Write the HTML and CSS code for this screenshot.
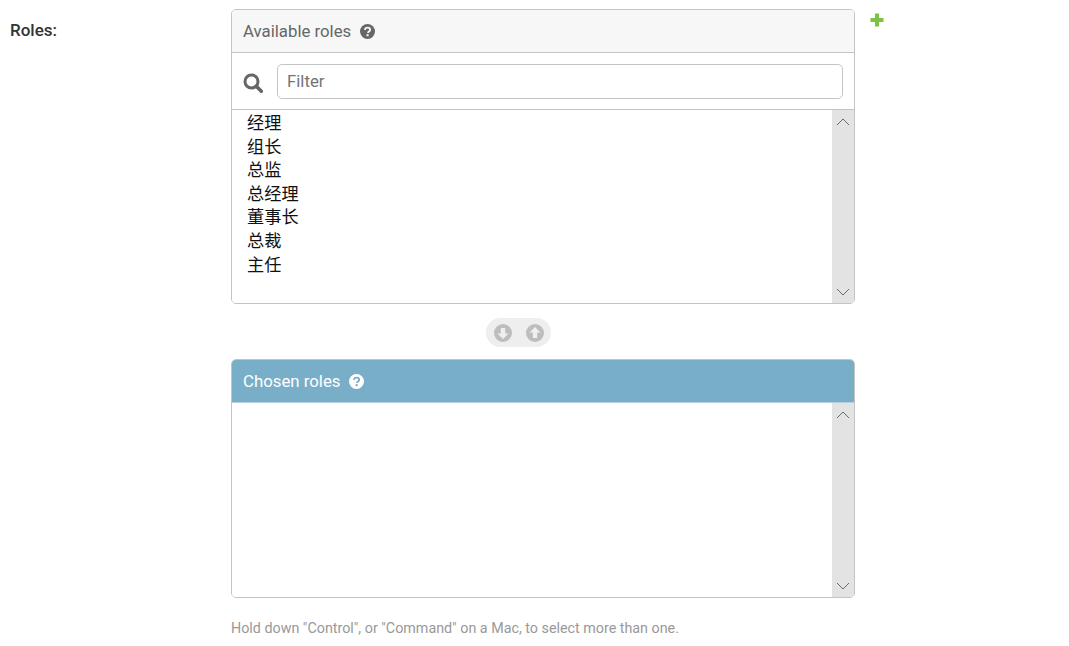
FILE: index.html
```html
<!DOCTYPE html>
<html lang="en">
<head>
  <meta charset="UTF-8" />
  <title>Roles</title>
  <link rel="stylesheet" href="styles.css">
</head>
<body>
  <div class="form-row">
    <label class="field-label">Roles:</label>
    <div class="field-body">
      <div class="selector">
        <div class="box">
          <h2 class="box-title">Available roles
            <svg class="help" viewBox="0 0 16 16"><circle cx="8" cy="8" r="8" fill="currentColor"/><path d="M5.2 6.2c.2-1.6 1.300-2.400 2.900-2.400 1.600 0 2.700.9 2.700 2.200 0 1-.6 1.500-1.300 2-.6.4-.9.7-.9 1.500" fill="none" stroke="var(--help-mark)" stroke-width="2"/><rect x="7" y="10.800" width="2.200" height="2.200" fill="var(--help-mark)"/></svg>
          </h2>
          <div class="filter-row">
            <svg class="search" viewBox="0 0 20 20"><circle cx="8.500" cy="8.500" r="6.500" fill="none" stroke="currentColor" stroke-width="3"/><path d="M13.300 13.300l5 5" stroke="currentColor" stroke-width="3.600" stroke-linecap="round"/></svg>
            <input class="filter" type="text" placeholder="Filter" />
          </div>
          <div class="list list-available">
            <ul class="items">
              <li>经理</li>
              <li>组长</li>
              <li>总监</li>
              <li>总经理</li>
              <li>董事长</li>
              <li>总裁</li>
              <li>主任</li>
            </ul>
            <div class="scrollbar">
              <svg viewBox="0 0 14 8"><path d="M1 7l6-6 6 6" fill="none" stroke="#6b6b6b"/></svg>
              <svg viewBox="0 0 14 8"><path d="M1 1l6 6 6-6" fill="none" stroke="#6b6b6b"/></svg>
            </div>
          </div>
        </div>

        <div class="mover-row">
          <div class="mover">
            <svg viewBox="0 0 18 18"><circle cx="9" cy="9" r="9" fill="#bdbdbd"/><path d="M9 15L3.500 9.500h3.300V4h4.400v5.500h3.300z" fill="#efefef"/></svg>
            <svg viewBox="0 0 18 18"><circle cx="9" cy="9" r="9" fill="#bdbdbd"/><path d="M9 3l5.500 5.500h-3.300V14H6.800V8.500H3.500z" fill="#efefef"/></svg>
          </div>
        </div>

        <div class="box">
          <h2 class="box-title chosen">Chosen roles
            <svg class="help" viewBox="0 0 16 16"><circle cx="8" cy="8" r="8" fill="currentColor"/><path d="M5.2 6.2c.2-1.6 1.300-2.400 2.900-2.400 1.600 0 2.700.9 2.700 2.200 0 1-.6 1.500-1.300 2-.6.4-.9.7-.9 1.500" fill="none" stroke="var(--help-mark)" stroke-width="2"/><rect x="7" y="10.800" width="2.200" height="2.200" fill="var(--help-mark)"/></svg>
          </h2>
          <div class="list list-chosen">
            <ul class="items"></ul>
            <div class="scrollbar">
              <svg viewBox="0 0 14 8"><path d="M1 7l6-6 6 6" fill="none" stroke="#6b6b6b"/></svg>
              <svg viewBox="0 0 14 8"><path d="M1 1l6 6 6-6" fill="none" stroke="#6b6b6b"/></svg>
            </div>
          </div>
        </div>
      </div>
      <p class="help-text">Hold down "Control", or "Command" on a Mac, to select more than one.</p>
    </div>
    <a class="add-link" href="#"><svg viewBox="0 0 14 14"><path d="M7 .5v13M.5 7h13" stroke="#7cc246" stroke-width="4"/></svg></a>
  </div>
</body>
</html>
```

FILE: styles.css
```css
body {
  margin: 0;
  font-family: Roboto, "Noto Sans CJK SC", sans-serif;
  background-color: #fff;
  color: #333;
}
.form-row {
  display: flex;
  align-items: flex-start;
  padding: 9px 0 0 10px;
}
.field-label {
  width: 221px;
  flex: none;
  padding-top: 11px;
  font-size: 17px;
  line-height: 20px;
  font-weight: 500;
}
.field-body {
  width: 624px;
  flex: none;
}
.box {
  border: 1px solid #c4c4c4;
  border-radius: 5px;
  overflow: hidden;
}
.box-title {
  --help-mark: #f7f7f7;
  display: flex;
  align-items: center;
  gap: 9px;
  height: 42px;
  margin: 0;
  padding: 0 11px;
  font-size: 16.8px;
  font-weight: 400;
  color: #666;
  background: #f7f7f7;
  border-bottom: 1px solid #c4c4c4;
}
.box-title.chosen {
  --help-mark: #79aec8;
  color: #fff;
  background: #79aec8;
  border-bottom-color: #b5cfdd;
}
.help {
  width: 15px;
  height: 15px;
  margin-top: 1px;
}
.filter-row {
  display: flex;
  align-items: center;
  gap: 14px;
  height: 56px;
  padding: 0 11px;
  border-bottom: 1px solid #c4c4c4;
  color: #666;
}
.search {
  width: 20px;
  height: 20px;
  flex: none;
  margin-top: 3px;
}
.filter {
  flex: 1;
  min-width: 0;
  height: 35px;
  box-sizing: border-box;
  padding: 0 9px;
  font: 16.8px Roboto, sans-serif;
  color: #333;
  border: 1px solid #c4c4c4;
  border-radius: 5px;
}
.filter::placeholder {
  color: #757575;
}
.list {
  display: flex;
  background: #fff;
}
.list-available {
  height: 193px;
}
.list-chosen {
  height: 194px;
}
.items {
  flex: 1;
  margin: 0;
  padding: 2px 0 0 15px;
  list-style: none;
  font-size: 17.2px;
  line-height: 23.6px;
  color: #111;
}
.scrollbar {
  width: 22px;
  flex: none;
  display: flex;
  flex-direction: column;
  justify-content: space-between;
  align-items: center;
  padding: 8px 0 7px;
  box-sizing: border-box;
  background: #e3e3e3;
}
.scrollbar svg {
  width: 14px;
  height: 8px;
}
.mover-row {
  display: flex;
  justify-content: center;
  padding: 14px 49px 12px 0;
}
.mover {
  display: flex;
  align-items: center;
  gap: 14px;
  height: 29px;
  padding: 0 7px 0 8px;
  background: #eee;
  border-radius: 15px;
}
.mover svg {
  width: 18px;
  height: 18px;
}
.help-text {
  margin: 22px 0 0;
  font-size: 14.3px;
  line-height: 16px;
  color: #999;
}
.add-link {
  display: block;
  margin: 4px 0 0 15px;
  line-height: 0;
}
.add-link svg {
  width: 14px;
  height: 14px;
}
```
